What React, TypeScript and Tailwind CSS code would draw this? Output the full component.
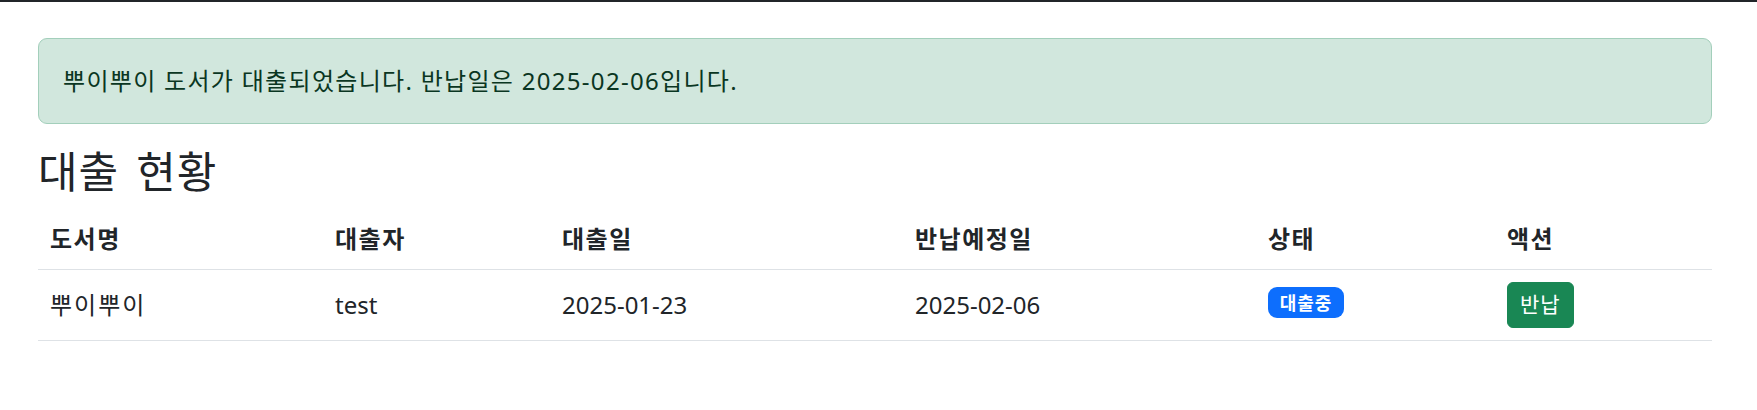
const columns = [
  { label: '도서명', width: 'w-[285px]' },
  { label: '대출자', width: 'w-[227px]' },
  { label: '대출일', width: 'w-[353px]' },
  { label: '반납예정일', width: 'w-[353px]' },
  { label: '상태', width: 'w-[239px]' },
  { label: '액션', width: 'w-[217px]' },
];

const loans = [
  {
    title: '뿌이뿌이',
    user: 'test',
    loanDate: '2025-01-23',
    dueDate: '2025-02-06',
    status: '대출중',
  },
];

function LoanTable() {
  return (
    <table className="w-full table-fixed border-collapse text-[24px] leading-[36px] text-[#212529]">
      <colgroup>
        {columns.map(({ label, width }) => (
          <col key={label} className={width} />
        ))}
      </colgroup>
      <thead>
        <tr>
          {columns.map(({ label }) => (
            <th
              key={label}
              className="border-b border-[#dee2e6] px-3 py-3 text-left font-bold tracking-[1.5px]"
            >
              {label}
            </th>
          ))}
        </tr>
      </thead>
      <tbody>
        {loans.map((loan, index) => (
          <tr key={index} className="align-middle">
            <td className="border-b border-[#dee2e6] px-3 py-3 tracking-[2px]">{loan.title}</td>
            <td className="border-b border-[#dee2e6] px-3 py-3">{loan.user}</td>
            <td className="border-b border-[#dee2e6] px-3 py-3">{loan.loanDate}</td>
            <td className="border-b border-[#dee2e6] px-3 py-3">{loan.dueDate}</td>
            <td className="border-b border-[#dee2e6] px-3 py-3">
              <span className="inline-block rounded-[9px] bg-[#0d6efd] px-[11.7px] py-[6.3px] text-[18px] leading-[18px] font-bold tracking-[1px] text-white [vertical-align:4px]">
                {loan.status}
              </span>
            </td>
            <td className="border-b border-[#dee2e6] px-3 py-3">
              <button className="rounded-[6px] border border-[#198754] bg-[#198754] px-3 py-[6px] align-middle text-[21px] leading-[31.5px] tracking-[1px] text-white">
                반납
              </button>
            </td>
          </tr>
        ))}
      </tbody>
    </table>
  );
}

export default function App() {
  return (
    <div
      className="min-h-[410px] bg-white text-[#212529]"
      style={{ fontFamily: '"Noto Sans", "Noto Sans CJK KR", sans-serif' }}
    >
      <div className="h-[2px] bg-[#212529]" />
      <div className="pt-[36px] pr-[45px] pl-[38px]">
        <div className="rounded-[9px] border border-[#a3cfbb] bg-[#d1e7dd] px-6 py-6 text-[24px] leading-[36px] tracking-[1.3px] text-[#0a3622]">
          뿌이뿌이 도서가 대출되었습니다. 반납일은 2025-02-06입니다.
        </div>
        <h4 className="mt-[22px] mb-3 text-[43px] leading-[51px] font-normal tracking-[1px] [word-spacing:5px]">
          대출 현황
        </h4>
        <LoanTable />
      </div>
    </div>
  );
}
